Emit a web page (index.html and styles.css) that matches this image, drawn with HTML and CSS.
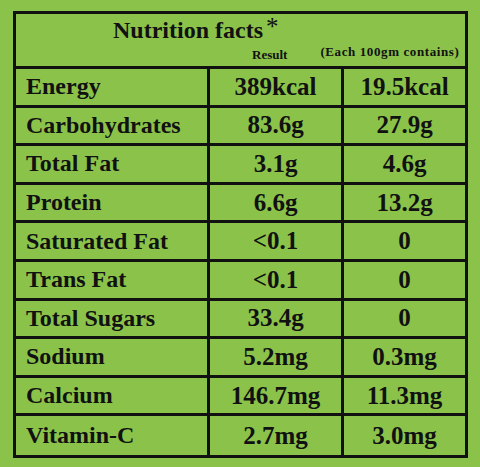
FILE: index.html
```html
<!DOCTYPE html>
<html lang="en">
<head>
  <meta charset="UTF-8" />
  <meta name="viewport" content="width=device-width, initial-scale=1.0" />
  <title>Nutrition Facts</title>
  <link rel="stylesheet" href="styles.css">
</head>
<body>
  <div class="facts">
    <div class="facts-head">
      <h1 class="title">Nutrition facts<span class="star">*</span></h1>
      <div class="subline">
        <span class="result">Result</span>
        <span class="note">(Each 100gm contains)</span>
      </div>
    </div>

    <div class="cell label">Energy</div>
    <div class="cell value">389kcal</div>
    <div class="cell value last">19.5kcal</div>

    <div class="cell label">Carbohydrates</div>
    <div class="cell value">83.6g</div>
    <div class="cell value last">27.9g</div>

    <div class="cell label">Total Fat</div>
    <div class="cell value">3.1g</div>
    <div class="cell value last">4.6g</div>

    <div class="cell label">Protein</div>
    <div class="cell value">6.6g</div>
    <div class="cell value last">13.2g</div>

    <div class="cell label">Saturated Fat</div>
    <div class="cell value">&lt;0.1</div>
    <div class="cell value last">0</div>

    <div class="cell label">Trans Fat</div>
    <div class="cell value">&lt;0.1</div>
    <div class="cell value last">0</div>

    <div class="cell label">Total Sugars</div>
    <div class="cell value">33.4g</div>
    <div class="cell value last">0</div>

    <div class="cell label">Sodium</div>
    <div class="cell value">5.2mg</div>
    <div class="cell value last">0.3mg</div>

    <div class="cell label">Calcium</div>
    <div class="cell value">146.7mg</div>
    <div class="cell value last">11.3mg</div>

    <div class="cell label bottom">Vitamin-C</div>
    <div class="cell value bottom">2.7mg</div>
    <div class="cell value last bottom">3.0mg</div>
  </div>
</body>
</html>
```

FILE: styles.css
```css
body {
  margin: 0;
  padding: 11px 0 0 13px;
  background-color: #8bc34a;
  font-family: 'Liberation Serif', 'Times New Roman', serif;
  font-weight: bold;
  color: #111;
}

.facts {
  box-sizing: border-box;
  width: 455px;
  height: 447px;
  border: 3px solid #111;
  display: grid;
  grid-template-columns: 194px 134px 121px;
  grid-template-rows: 55px repeat(10, 1fr);
}

.facts-head {
  grid-column: 1 / 4;
  border-bottom: 3px solid #111;
}

.title {
  margin: 0;
  padding: 4px 0 0 97px;
  font-size: 24px;
  line-height: 24px;
  font-weight: bold;
}

.star {
  font-size: 25px;
  font-weight: normal;
  position: relative;
  top: -3px;
  margin-left: 3px;
}

.subline {
  display: flex;
  align-items: flex-end;
  padding-top: 2px;
}

.result {
  margin-left: 236px;
  font-size: 13px;
  position: relative;
  top: 3px;
}

.note {
  margin-left: 33px;
  font-size: 13px;
  letter-spacing: 0.6px;
}

.cell {
  display: flex;
  align-items: center;
  border-bottom: 3px solid #111;
  border-right: 3px solid #111;
  font-size: 24px;
}

.label {
  padding-left: 10px;
}

.value {
  justify-content: center;
  font-size: 25px;
}

.last {
  border-right: none;
}

.bottom {
  border-bottom: none;
}
```
